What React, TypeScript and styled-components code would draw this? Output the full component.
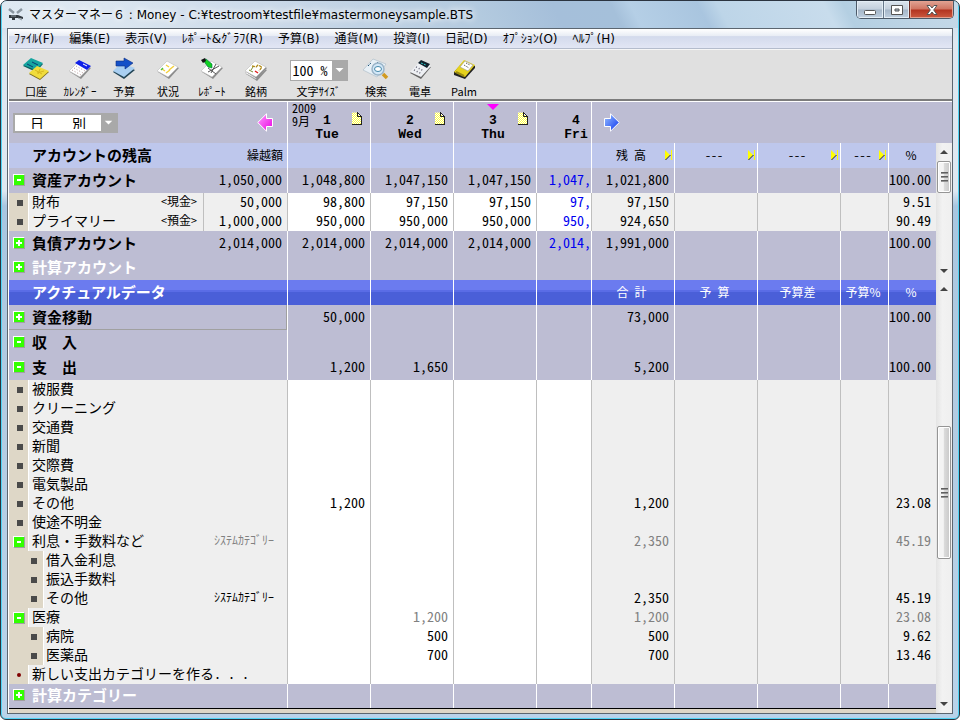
import React from "react";
import styled, { createGlobalStyle, css } from "styled-components";

const GlobalStyle = createGlobalStyle`
  *, *::before, *::after { box-sizing: border-box; }
  body { margin: 0; background: #fff; }
  button, select { font: inherit; color: inherit; margin: 0; }
`;

const gothic = css`
  font-family: "Noto Sans CJK JP", "Liberation Sans", sans-serif;
`;
const halfWidth = css`
  font-feature-settings: "hwid" 1;
`;

/* ---------- window frame ---------- */

const Window = styled.div`
  ${gothic}
  display: flex;
  flex-direction: column;
  min-height: 100vh;
  padding: 0 5px 5px;
  border: 1px solid #2b3440;
  border-radius: 7px 7px 6px 6px;
  box-shadow: inset 0 0 0 1px #4fd4f5;
  background: linear-gradient(#c3d7e8 0, #dde7f0 40px, #dfe8f1 190px, #a9c6e0 205px, #b4cce2 420px, #b9d3ea 100%);
  color: #000;
  overflow: hidden;
`;

const TitleBar = styled.header`
  display: flex;
  align-items: center;
  height: 27px;
  margin: 0 -4px;
  padding: 0 4px 0 6px;
  gap: 5px;
  background: linear-gradient(62deg, #dfe9f2 0, #dbe6f0 12%, #c9d8e8 30%, #b3cadf 50%, #a5bfda 58%, #a5c0da 64%, #b5cfe6 66%, #a9c5df 73%, #bdd5e8 75%, #c8dcec 86%, #b4cfe2 88%, #c5d9e8 100%);
`;

const Title = styled.h1`
  flex: 1;
  margin: 0;
  font: 12px/20px "DejaVu Sans", "Noto Sans CJK JP", sans-serif;
  white-space: nowrap;
  text-shadow: 0 0 6px #fff, 0 0 8px #fff;
`;

const WindowButtons = styled.div`
  display: flex;
  align-self: flex-start;
  height: 18px;
  border: 1px solid #4c5968;
  border-top: 0;
  border-radius: 0 0 5px 5px;
  overflow: hidden;
`;

const WindowButton = styled.button<{ $close?: boolean }>`
  display: flex;
  align-items: center;
  justify-content: center;
  width: ${(p) => (p.$close ? 44 : 26)}px;
  padding: 0;
  border: 0;
  border-left: 1px solid ${(p) => (p.$close ? "#6b2b22" : "#67788a")};
  box-shadow: inset 0 0 0 1px ${(p) => (p.$close ? "#e3a08f" : "#e3edf5")};
  background: ${(p) =>
    p.$close
      ? "linear-gradient(#e0a394 0, #cf7461 48%, #b23320 52%, #cc5a40 100%)"
      : "linear-gradient(#dce5ee 0, #c3d0dd 48%, #a5b6c8 52%, #bfcfdf 100%)"};
  &:first-child { border-left: 0; }
`;

const Client = styled.main`
  flex: 1;
  display: flex;
  flex-direction: column;
  margin: 0 1px;
  padding-left: 1px;
  border: 1px solid #5c6670;
  background: #fff;
`;

/* ---------- menu and toolbar ---------- */

const MenuBar = styled.nav`
  display: flex;
  gap: 15px;
  height: 20px;
  padding-left: 5px;
  border-bottom: 1px solid #b4bccc;
  background: linear-gradient(#fff 0, #e9edf5 35%, #d3daec 40%, #e2e6f4 100%);
`;

const MenuItem = styled.button`
  padding: 0;
  border: 0;
  background: none;
  font: 12px/18px "DejaVu Sans", "Noto Sans CJK JP", sans-serif;
  white-space: nowrap;
`;

const ToolBar = styled.div`
  display: flex;
  height: 52px;
  padding: 7px 5px 0;
  border-top: 1px solid #f6f6f6;
  border-bottom: 2px solid #7c7c7c;
  background: #e0e0e0;
`;

const ToolButton = styled.button`
  display: flex;
  flex-direction: column;
  align-items: center;
  width: 44px;
  padding: 0;
  border: 0;
  background: none;
  font-size: 11px;
  line-height: 14px;
  white-space: nowrap;
  svg { height: 27px; flex: none; }
`;

const SizeTool = styled.label`
  display: flex;
  flex-direction: column;
  align-items: center;
  width: 76px;
  padding: 3px 0 0 5px;
  font-size: 11px;
  line-height: 14px;
  span:last-child { padding-top: 3px; }
`;

const SelectBox = styled.span<{ $small?: boolean }>`
  display: flex;
  align-items: stretch;
  width: ${(p) => (p.$small ? 58 : 105)}px;
  height: ${(p) => (p.$small ? 21 : 20)}px;
  border: ${(p) => (p.$small ? 1 : 2)}px solid #a9a9a9;
  background: #fff;
  svg { flex: none; width: 15px; height: 100%; background: #a9a9a9; }
`;

const Select = styled.select<{ $half?: boolean }>`
  ${gothic}
  ${(p) => p.$half && halfWidth}
  flex: 1;
  min-width: 0;
  appearance: none;
  padding: 0 0 2px ${(p) => (p.$half ? 2 : 15)}px;
  border: 0;
  background: none;
  font-size: 14px;
  line-height: 16px;
`;

/* ---------- date strip ---------- */

const DateStrip = styled.div`
  display: grid;
  grid-template-columns: 279px repeat(3, 83px) minmax(0, 1fr) 360px;
  height: 42px;
  border-top: 1px solid #fff;
  background: #bdbdd3;
`;

const PeriodCell = styled.div`
  display: flex;
  align-items: center;
  justify-content: space-between;
  padding: 0 14px 0 4px;
  border-right: 1px solid #fff;
`;

const DayCell = styled.div`
  ${halfWidth}
  display: grid;
  grid-template: 12px 14px 14px / 27px 24px 12px 19px;
  min-width: 0;
  border-right: 1px solid #fff;
  font-size: 12px;
  line-height: 12px;
`;
const Year = styled.span`
  grid-area: 1 / 1 / 2 / 3;
  padding-left: 4px;
`;
const Month = styled.span`
  grid-area: 2 / 1 / 3 / 2;
  padding-left: 4px;
  line-height: 14px;
  white-space: nowrap;
`;
const dayFont = css`
  text-align: center;
  font: bold 13px/14px "Liberation Mono", monospace;
`;
const DayNumber = styled.b`
  grid-area: 2 / 2 / 3 / 3;
  ${dayFont}
`;
const WeekDay = styled.b`
  grid-area: 3 / 2 / 4 / 3;
  ${dayFont}
`;
const Marker = styled.span`
  grid-area: 1 / 2 / 2 / 3;
  display: flex;
  justify-content: center;
`;
const Note = styled.button`
  grid-area: 1 / 4 / 3 / 5;
  display: flex;
  align-items: flex-end;
  padding: 0 0 3px 1px;
  border: 0;
  background: none;
`;
const ArrowButton = styled.button`
  display: flex;
  padding: 0;
  border: 0;
  background: none;
`;
const NextArea = styled.div`
  display: flex;
  align-items: center;
  padding-left: 12px;
`;

/* ---------- tables ---------- */

const Panel = styled.section`
  display: flex;
  align-items: stretch;
`;

const Sheet = styled.table`
  flex: 1;
  width: 0;
  table-layout: fixed;
  border-collapse: separate;
  border-spacing: 0;
  font-size: 14px;
  th, td { padding: 0; text-align: left; font-weight: 400; }
`;

type Tone = "head" | "blue" | "group" | "item";

const Row = styled.tr<{ $tone: Tone; $short?: boolean }>`
  height: ${(p) => (p.$tone === "item" ? 19 : p.$short ? 24 : 25)}px;
  background: ${(p) =>
    ({
      head: "#bec7ec",
      blue: "linear-gradient(#6b7bef 0 40%, #5a6ce6 40% 48%, #4a5fd8 48% 100%)",
      group: "#bdbdd3",
      item: "#efefef",
    })[p.$tone]};
  ${(p) => p.$tone === "blue" && css`color: #fff;`}
  td { border-right: 1px solid ${(p) => (p.$tone === "item" ? "#bfbfbf" : "#fff")}; }
  > :last-child { border-right: 0; }
`;

const NumberCell = styled.td<{ $white?: boolean; $ink?: string; $cut?: boolean }>`
  && {
    ${halfWidth}
    padding: 0 ${(p) => (p.$cut ? 0 : 5)}px 3px 0;
    line-height: 16px;
    text-align: right;
    white-space: nowrap;
    color: ${(p) => p.$ink ?? "inherit"};
    ${(p) => p.$white && css`background: #fff;`}
  }
`;

const HeadCell = styled.th<{ $end?: boolean }>`
  && {
    border-right: 1px solid #fff;
    padding-bottom: 2px;
    font-size: 12px;
    line-height: 18px;
    white-space: nowrap;
    text-align: ${(p) => (p.$end ? "right" : "center")};
    ${(p) => p.$end && css`padding-right: 4px;`}
  }
  &&:last-child { border-right: 0; }
`;

const HeadLabel = styled.span<{ $plain?: boolean; $half?: boolean }>`
  display: flex;
  align-items: center;
  padding: ${(p) => (p.$plain ? "0 3px 0 0" : "0 2px 0 5px")};
  ${(p) => p.$half && halfWidth}
  span { flex: 1; text-align: center; }
`;

const NameCell = styled.th<{ $edge?: string; $raised?: boolean }>`
  && {
    border-right: ${(p) => (p.$edge ? `1px solid ${p.$edge}` : "0")};
    ${(p) => p.$raised && css`box-shadow: inset -1px -1px 0 #a0a0a0;`}
  }
`;

const Name = styled.div<{ $item?: boolean }>`
  display: flex;
  align-items: stretch;
  height: ${(p) => (p.$item ? 19 : 20)}px;
  line-height: ${(p) => (p.$item ? 16 : 18)}px;
  white-space: nowrap;
`;

const Gutter = styled.span<{ $deep?: boolean; $plain?: boolean; $bullet?: boolean }>`
  flex: none;
  display: flex;
  align-items: center;
  width: ${(p) => (p.$deep ? 35 : 20)}px;
  padding-bottom: ${(p) => (p.$plain ? 2 : 0)}px;
  padding-left: ${(p) => (p.$deep ? 22 : p.$bullet ? 8 : 4)}px;
  ${(p) => !p.$plain && css`background: #ded7c7; border-right: 1px solid #fff;`}
`;

const Label = styled.span<{ $strong?: boolean; $ink?: string; $deep?: boolean; $half?: boolean }>`
  flex: 1;
  padding-left: ${(p) => (p.$deep ? 2 : 3)}px;
  white-space: pre;
  font-size: ${(p) => (p.$strong ? 15 : 14)}px;
  font-weight: ${(p) => (p.$strong ? 700 : 400)};
  color: ${(p) => p.$ink ?? "inherit"};
  ${(p) => p.$half && halfWidth}
`;

const Tag = styled.span<{ $wide?: boolean; $ink?: string }>`
  ${halfWidth}
  padding-right: ${(p) => (p.$wide ? 13 : 6)}px;
  font-size: 12px;
  color: ${(p) => p.$ink ?? "inherit"};
`;

const Bullet = styled.i`
  width: 6px;
  height: 6px;
  background: #4a4a4a;
`;
const NewDot = styled.i`
  width: 4px;
  height: 4px;
  margin-left: 4px;
  border-radius: 2px;
  background: #800000;
`;

const ToggleButton = styled.button`
  display: flex;
  width: 12px;
  height: 12px;
  padding: 0;
  border: 1px solid;
  border-color: #fff #a0a0a0 #a0a0a0 #fff;
  background: #33ff00;
`;

/* ---------- scroll bars ---------- */

const Scroll = styled.div`
  flex: none;
  display: flex;
  flex-direction: column;
  width: 16px;
  padding: 0 1px;
  background: linear-gradient(90deg, #e4e4e4, #f2f2f2 40%, #efefef);
`;
const ScrollArrow = styled.button`
  display: flex;
  align-items: center;
  justify-content: center;
  height: 18px;
  padding: 0;
  border: 0;
  background: none;
`;
const Track = styled.div<{ $grow: number }>`
  flex: ${(p) => p.$grow} 1 0;
`;
const Thumb = styled.div<{ $size: number }>`
  display: flex;
  flex-direction: column;
  align-items: center;
  justify-content: center;
  gap: 2px;
  height: ${(p) => p.$size}px;
  border: 1px solid #959595;
  border-radius: 2px;
  box-shadow: inset 0 0 0 1px #fff;
  background: linear-gradient(90deg, #f4f4f4 0 45%, #dcdcdc 50%, #c8c8c8 100%);
  i { width: 7px; height: 2px; background: linear-gradient(#444, #b0b0b0); }
`;

const Footer = styled.div`
  flex: 1;
  min-height: 4px;
  border-top: 1px solid #000;
  background: #ded7c7;
`;
const Body = styled.div`
  display: flex;
  flex: 1;
`;
const BodyMain = styled.div`
  flex: 1;
  display: flex;
  flex-direction: column;
`;

/* ---------- drawings ---------- */

const Toggle = ({ open }: { open: boolean }) => (
  <ToggleButton aria-label={open ? "閉じる" : "開く"}>
    <svg width="10" height="10" viewBox="0 0 10 10" shapeRendering="crispEdges">
      {open ? <path d="M3 4h4v2H3z" fill="#fff" /> : <path d="M2 4h2V2h2v2h2v2H6v2H4V6H2z" fill="#fff" />}
    </svg>
  </ToggleButton>
);

const DownArrow = () => (
  <svg viewBox="0 0 15 17"><path d="M3.500 6h8l-4 4z" fill="#fff" /></svg>
);

const SkipMark = () => (
  <svg width="7" height="10" viewBox="0 0 7 10">
    <path d="M0 0l5 5-5 5z" fill="#ff0" />
    <path d="M5.500 5L.5 10" stroke="#222" fill="none" />
    <path d="M6 0h1v10H6z" fill="#ff0" />
  </svg>
);

const NotePage = () => (
  <svg width="10" height="13" viewBox="0 0 10 13">
    <defs>
      <pattern id="dither" width="2" height="2" patternUnits="userSpaceOnUse">
        <rect width="2" height="2" fill="#fff" />
        <path d="M1 0h1v1H1zM0 1h1v1H0z" fill="#ffff40" />
      </pattern>
    </defs>
    <path d="M0 .5h6l4 4V12.500H0z" fill="url(#dither)" />
    <path d="M5.500 0v4.500H10M5.500.5l4 4V13M0 12.500h10" fill="none" stroke="#222" />
  </svg>
);

const Sheet3D = ({ fill = "#fff", y = 0 }: { fill?: string; y?: number }) => (
  <g transform={`translate(0 ${y})`}>
    <path d="M4 15L14 5l11 6-10 11z" fill="#8d8d8d" />
    <path d="M3 14L13 4l11 6-10 10z" fill={fill} stroke="#bcbcbc" strokeWidth=".6" />
  </g>
);

const icons: Record<string, React.ReactNode> = {
  account: (
    <>
      <path d="M1 9l8-7 12 5-7 8z" fill="#0d5f5f" />
      <path d="M1 8l8-7 12 5-7 7z" fill="#16a5a0" />
      <path d="M5 7l6 3m-1-5l6 3" stroke="#083c70" />
      <path d="M7 17l8-7 12 5-9 8z" fill="#7a6a20" />
      <path d="M7 16l8-7 12 5-9 8z" fill="#f0dc3c" />
      <path d="M13 13l7 4m-2-5l-2 5m6-3l-7 2" stroke="#d8b820" />
    </>
  ),
  calendar: (
    <>
      <Sheet3D />
      <path d="M9 6l4-3 12 6-4 4z" fill="#1020e8" />
      <path d="M17 7l4 2" stroke="#fff" />
      <path d="M8 11l9 5m-11-3l9 5m-5-9l9 5" stroke="#b09090" strokeDasharray="1 2" />
    </>
  ),
  budget: (
    <>
      <path d="M3 15l8-8 14 6-11 9z" fill="#224455" />
      <path d="M3 14l8-8 14 5-11 9z" fill="#a9cff2" />
      <path d="M6 4h8V1l9 5-8 6V9H6z" fill="#1450c8" stroke="#0a2c80" strokeWidth=".6" />
    </>
  ),
  status: (
    <>
      <Sheet3D />
      <path d="M12 8l3 2m-7 2l3 2m4-1l5-4m-8 7l4-3" stroke="#f2d040" strokeWidth="1.500" />
      <path d="M7 13l2-2" stroke="#4ac040" strokeWidth="1.500" />
    </>
  ),
  report: (
    <>
      <Sheet3D />
      <path d="M10 15l11-6m-11 2l8 6m0-10l-5 9" stroke="#555" />
      <path d="M5 3l3-1 6 5v4l-4-1z" fill="#10d020" stroke="#006644" strokeWidth=".6" />
      <path d="M3 3l4-2 1 3-3 2z" fill="#111" />
    </>
  ),
  brand: (
    <>
      <Sheet3D y={2} />
      <Sheet3D />
      <path d="M10 9l4 1 2-2 4 2-3 4" stroke="#b08a18" strokeWidth="1.300" strokeDasharray="3 1" fill="none" />
      <path d="M7 13l4 2m0-5l-2 3" stroke="#7a8a30" />
      <path d="M13 14l3 2" stroke="#e02020" strokeWidth="1.500" />
    </>
  ),
  search: (
    <>
      <path d="M1 13L11 2l13 5-9 13z" fill="#e8f0f6" stroke="#a8b8c4" strokeWidth=".6" />
      <path d="M6 9l3-3m4 2l3-3" stroke="#225577" strokeDasharray="2 1" />
      <circle cx="16" cy="12" r="6" fill="#d3e8f8" stroke="#9ab4c8" strokeWidth="1.500" />
      <ellipse cx="16" cy="12" rx="3.500" ry="2.500" fill="#fff" stroke="#4488aa" />
      <path d="M21 17l4 4" stroke="#d19a20" strokeWidth="3.500" />
    </>
  ),
  calculator: (
    <>
      <path d="M4 16L14 5l11 5-10 12z" fill="#666" />
      <path d="M4 15L14 4l11 5-10 11z" fill="#eef0f4" />
      <path d="M12 6l3-3 9 4-3 4z" fill="#10202c" />
      <path d="M15 6l5 2" stroke="#2cc8c8" strokeDasharray="2 1" />
      <path d="M8 13l8 4M10 10l8 4" stroke="#667" strokeDasharray="1 2" strokeWidth="1.500" />
    </>
  ),
  palm: (
    <>
      <path d="M4 15L14 4l11 5v2L15 22 4 18z" fill="#222" />
      <path d="M4 15L14 3l11 5-10 12z" fill="#e6d21c" />
      <path d="M10 10l5-6 8 4-5 6z" fill="#fff" stroke="#999" strokeWidth=".6" />
      <path d="M14 8l5 3m-3-5l4 2" stroke="#444" strokeDasharray="1 1" />
      <path d="M6 15l8 4" stroke="#9a8a10" strokeWidth="2" />
    </>
  ),
};

const ToolIcon = ({ name }: { name: string }) => (
  <svg width="28" height="27" viewBox="0 0 28 27" fill="none">{icons[name]}</svg>
);

const BigArrow = ({ left }: { left?: boolean }) => (
  <svg width="16" height="19" viewBox="0 0 16 19">
    <defs>
      <linearGradient id={left ? "pink" : "blue"} x1="0" y1="0" x2="1" y2="1">
        <stop offset="0" stopColor={left ? "#ff9cff" : "#9cc4ff"} />
        <stop offset="1" stopColor={left ? "#e800e0" : "#0830f0"} />
      </linearGradient>
    </defs>
    <path
      d={left ? "M.7 9.500L9.500.8V5.500h6v8h-6v4.700z" : "M15.300 9.500L6.500.8V5.500h-6v8h6v4.700z"}
      fill={`url(#${left ? "pink" : "blue"})`}
      stroke="#fff"
    />
  </svg>
);

const AppIcon = () => (
  <svg width="16" height="14" viewBox="0 0 16 14" fill="none">
    <path d="M1 1l5 4M14 1L9 5" stroke="#8a96a0" strokeWidth="2.500" />
    <path d="M1 7h9l5 2v2l-4-1H7v2H4v-2H1z" fill="#333a40" />
    <path d="M3 8h5m2 2l4 2" stroke="#8d98a0" />
  </svg>
);

const ScrollBar = ({ before, size, after }: { before: number; size: number; after: number }) => (
  <Scroll>
    <ScrollArrow aria-label="上へ">
      <svg width="8" height="4" viewBox="0 0 8 4"><path d="M0 4l4-4 4 4z" fill="#444" /></svg>
    </ScrollArrow>
    <Track $grow={before} />
    <Thumb $size={size}><i /><i /><i /></Thumb>
    <Track $grow={after} />
    <ScrollArrow aria-label="下へ">
      <svg width="8" height="4" viewBox="0 0 8 4"><path d="M0 0l4 4 4-4z" fill="#444" /></svg>
    </ScrollArrow>
  </Scroll>
);

/* ---------- data ---------- */

const menus = ["ﾌｧｲﾙ(F)", "編集(E)", "表示(V)", "ﾚﾎﾟｰﾄ&ｸﾞﾗﾌ(R)", "予算(B)", "通貨(M)", "投資(I)", "日記(D)", "ｵﾌﾟｼｮﾝ(O)", "ﾍﾙﾌﾟ(H)"];
const toolsLeft = [
  ["account", "口座"],
  ["calendar", "ｶﾚﾝﾀﾞｰ"],
  ["budget", "予算"],
  ["status", "状況"],
  ["report", "ﾚﾎﾟｰﾄ"],
  ["brand", "銘柄"],
];
const toolsRight = [
  ["search", "検索"],
  ["calculator", "電卓"],
  ["palm", "Palm"],
];

type Line = {
  name: string;
  group?: boolean;
  open?: boolean;
  dim?: boolean;
  deep?: boolean;
  fresh?: boolean;
  raised?: boolean;
  short?: boolean;
  tag?: string;
  carried?: string;
  days?: string[];
  total?: string;
  percent?: string;
};

const balances: Line[] = [
  { name: "資産アカウント", group: true, open: true, carried: "1,050,000", days: ["1,048,800", "1,047,150", "1,047,150", "1,047,"], total: "1,021,800", percent: "100.00" },
  { name: "財布", tag: "<現金>", carried: "50,000", days: ["98,800", "97,150", "97,150", "97,"], total: "97,150", percent: "9.51" },
  { name: "プライマリー", tag: "<預金>", carried: "1,000,000", days: ["950,000", "950,000", "950,000", "950,"], total: "924,650", percent: "90.49" },
  { name: "負債アカウント", group: true, open: false, carried: "2,014,000", days: ["2,014,000", "2,014,000", "2,014,000", "2,014,"], total: "1,991,000", percent: "100.00" },
  { name: "計算アカウント", group: true, open: false, dim: true, short: true },
];

const actuals: Line[] = [
  { name: "資金移動", group: true, open: false, raised: true, days: ["50,000"], total: "73,000", percent: "100.00" },
  { name: "収　入", group: true, open: true },
  { name: "支　出", group: true, open: true, days: ["1,200", "1,650"], total: "5,200", percent: "100.00" },
  { name: "被服費" },
  { name: "クリーニング" },
  { name: "交通費" },
  { name: "新聞" },
  { name: "交際費" },
  { name: "電気製品" },
  { name: "その他", days: ["1,200"], total: "1,200", percent: "23.08" },
  { name: "使途不明金" },
  { name: "利息・手数料など", open: true, dim: true, tag: "ｼｽﾃﾑｶﾃｺﾞﾘｰ", total: "2,350", percent: "45.19" },
  { name: "借入金利息", deep: true },
  { name: "振込手数料", deep: true },
  { name: "その他", deep: true, tag: "ｼｽﾃﾑｶﾃｺﾞﾘｰ", total: "2,350", percent: "45.19" },
  { name: "医療", open: true, dim: true, days: ["", "1,200"], total: "1,200", percent: "23.08" },
  { name: "病院", deep: true, days: ["", "500"], total: "500", percent: "9.62" },
  { name: "医薬品", deep: true, days: ["", "700"], total: "700", percent: "13.46" },
  { name: "新しい支出カテゴリーを作る. . .", fresh: true },
  { name: "計算カテゴリー", group: true, open: false, dim: true, short: true },
];

const Col = styled.col<{ $w?: number }>`
  width: ${(p) => (p.$w ? `${p.$w}px` : "auto")};
`;

const Columns = ({ split }: { split?: boolean }) => (
  <colgroup>
    {(split ? [195, 84] : [279]).map((w) => <Col key={w} $w={w} />)}
    <Col $w={83} /><Col $w={83} /><Col $w={83} /><Col />
    <Col $w={83} /><Col $w={83} /><Col $w={83} /><Col $w={48} /><Col $w={47} />
  </colgroup>
);

const SheetRow = ({ line, split }: { line: Line; split?: boolean }) => {
  const item = !line.group;
  const ink = line.dim && item ? "#808080" : undefined;
  return (
    <Row $tone={item ? "item" : "group"} $short={line.short}>
      <NameCell scope="row" $edge={split ? (item ? "#bfbfbf" : undefined) : item ? "#bfbfbf" : "#fff"} $raised={line.raised}>
        <Name $item={item}>
          <Gutter $plain={line.group} $deep={line.deep} $bullet={line.open === undefined && !line.fresh}>
            {line.open !== undefined ? <Toggle open={line.open} /> : line.fresh ? <NewDot /> : <Bullet />}
          </Gutter>
          <Label $strong={line.group} $deep={line.deep} $half={line.fresh} $ink={line.group && line.dim ? "#fff" : undefined}>{line.name}</Label>
          {line.tag && <Tag $wide={!split} $ink={ink}>{line.tag}</Tag>}
        </Name>
      </NameCell>
      {split && <NumberCell>{line.carried}</NumberCell>}
      {[0, 1, 2, 3].map((d) => (
        <NumberCell key={d} $white={item} $cut={d === 3} $ink={d === 3 ? "#0000f0" : ink}>{line.days?.[d]}</NumberCell>
      ))}
      <NumberCell $ink={ink}>{line.total}</NumberCell>
      <NumberCell /><NumberCell /><NumberCell />
      <NumberCell $ink={ink}>{line.percent}</NumberCell>
    </Row>
  );
};

export default function App() {
  return (
    <>
      <GlobalStyle />
      <Window>
        <TitleBar>
          <AppIcon />
          <Title>マスターマネー６ : Money - C:¥testroom¥testfile¥mastermoneysample.BTS</Title>
          <WindowButtons>
            <WindowButton aria-label="最小化">
              <svg width="12" height="12"><rect x=".5" y="6.500" width="11" height="4" rx="1" fill="#fff" stroke="#555" /></svg>
            </WindowButton>
            <WindowButton aria-label="元に戻す">
              <svg width="12" height="10"><path d="M.5.5h11v9H.5zM4 4h4v2H4z" fill="#fff" fillRule="evenodd" stroke="#555" /></svg>
            </WindowButton>
            <WindowButton $close aria-label="閉じる">
              <svg width="12" height="10"><path d="M1 .5h3L6 3 8 .5h3L7.700 5 11 9.500H8L6 7 4 9.500H1L4.300 5z" fill="#fff" stroke="#555" /></svg>
            </WindowButton>
          </WindowButtons>
        </TitleBar>
        <Client>
          <MenuBar>{menus.map((m) => <MenuItem key={m}>{m}</MenuItem>)}</MenuBar>
          <ToolBar>
            {toolsLeft.map(([icon, label]) => (
              <ToolButton key={icon}><ToolIcon name={icon} />{label}</ToolButton>
            ))}
            <SizeTool>
              <SelectBox $small>
                <Select $half defaultValue="100"><option value="100">100 %</option></Select>
                <DownArrow />
              </SelectBox>
              <span>文字ｻｲｽﾞ</span>
            </SizeTool>
            {toolsRight.map(([icon, label]) => (
              <ToolButton key={icon}><ToolIcon name={icon} />{label}</ToolButton>
            ))}
          </ToolBar>

          <DateStrip>
            <PeriodCell>
              <SelectBox>
                <Select aria-label="集計単位" defaultValue="day"><option value="day">日　　別</option></Select>
                <DownArrow />
              </SelectBox>
              <ArrowButton aria-label="前へ"><BigArrow left /></ArrowButton>
            </PeriodCell>
            <DayCell>
              <Year>2009</Year><Month>9月</Month>
              <DayNumber>1</DayNumber><WeekDay>Tue</WeekDay>
              <Note aria-label="日記 1"><NotePage /></Note>
            </DayCell>
            <DayCell>
              <DayNumber>2</DayNumber><WeekDay>Wed</WeekDay>
              <Note aria-label="日記 2"><NotePage /></Note>
            </DayCell>
            <DayCell>
              <Marker><svg width="12" height="8" viewBox="0 0 12 8"><path d="M0 2h12L6 8z" fill="#ff00ff" /></svg></Marker>
              <DayNumber>3</DayNumber><WeekDay>Thu</WeekDay>
              <Note aria-label="日記 3"><NotePage /></Note>
            </DayCell>
            <DayCell><DayNumber>4</DayNumber><WeekDay>Fri</WeekDay></DayCell>
            <NextArea><ArrowButton aria-label="次へ"><BigArrow /></ArrowButton></NextArea>
          </DateStrip>

          <Panel>
            <Sheet>
              <Columns split />
              <thead>
                <Row $tone="head">
                  <NameCell scope="col"><Name><Gutter $plain /><Label $strong>アカウントの残高</Label></Name></NameCell>
                  <HeadCell $end>繰越額</HeadCell>
                  <HeadCell /><HeadCell /><HeadCell /><HeadCell />
                  <HeadCell><HeadLabel $half><span>残 高</span><SkipMark /></HeadLabel></HeadCell>
                  <HeadCell><HeadLabel $half><span>---</span><SkipMark /></HeadLabel></HeadCell>
                  <HeadCell><HeadLabel $half><span>---</span><SkipMark /></HeadLabel></HeadCell>
                  <HeadCell><HeadLabel $half><span>---</span><SkipMark /></HeadLabel></HeadCell>
                  <HeadCell><HeadLabel $plain><span>%</span></HeadLabel></HeadCell>
                </Row>
              </thead>
              <tbody>{balances.map((l) => <SheetRow key={l.name} line={l} split />)}</tbody>
            </Sheet>
            <ScrollBar before={0} size={32} after={1} />
          </Panel>

          <Body>
            <BodyMain>
              <Panel>
                <Sheet>
                  <Columns />
                  <thead>
                    <Row $tone="blue">
                      <NameCell scope="col" $edge="#fff"><Name><Gutter $plain /><Label $strong>アクチュアルデータ</Label></Name></NameCell>
                      <HeadCell /><HeadCell /><HeadCell /><HeadCell />
                      <HeadCell><HeadLabel $plain $half><span>合 計</span></HeadLabel></HeadCell>
                      <HeadCell><HeadLabel $plain $half><span>予 算</span></HeadLabel></HeadCell>
                      <HeadCell><HeadLabel $plain><span>予算差</span></HeadLabel></HeadCell>
                      <HeadCell><HeadLabel $plain><span>予算%</span></HeadLabel></HeadCell>
                      <HeadCell><HeadLabel $plain><span>%</span></HeadLabel></HeadCell>
                    </Row>
                  </thead>
                  <tbody>{actuals.map((l, i) => <SheetRow key={i} line={l} />)}</tbody>
                </Sheet>
              </Panel>
              <Footer />
            </BodyMain>
            <ScrollBar before={128} size={133} after={136} />
          </Body>
        </Client>
      </Window>
    </>
  );
}
